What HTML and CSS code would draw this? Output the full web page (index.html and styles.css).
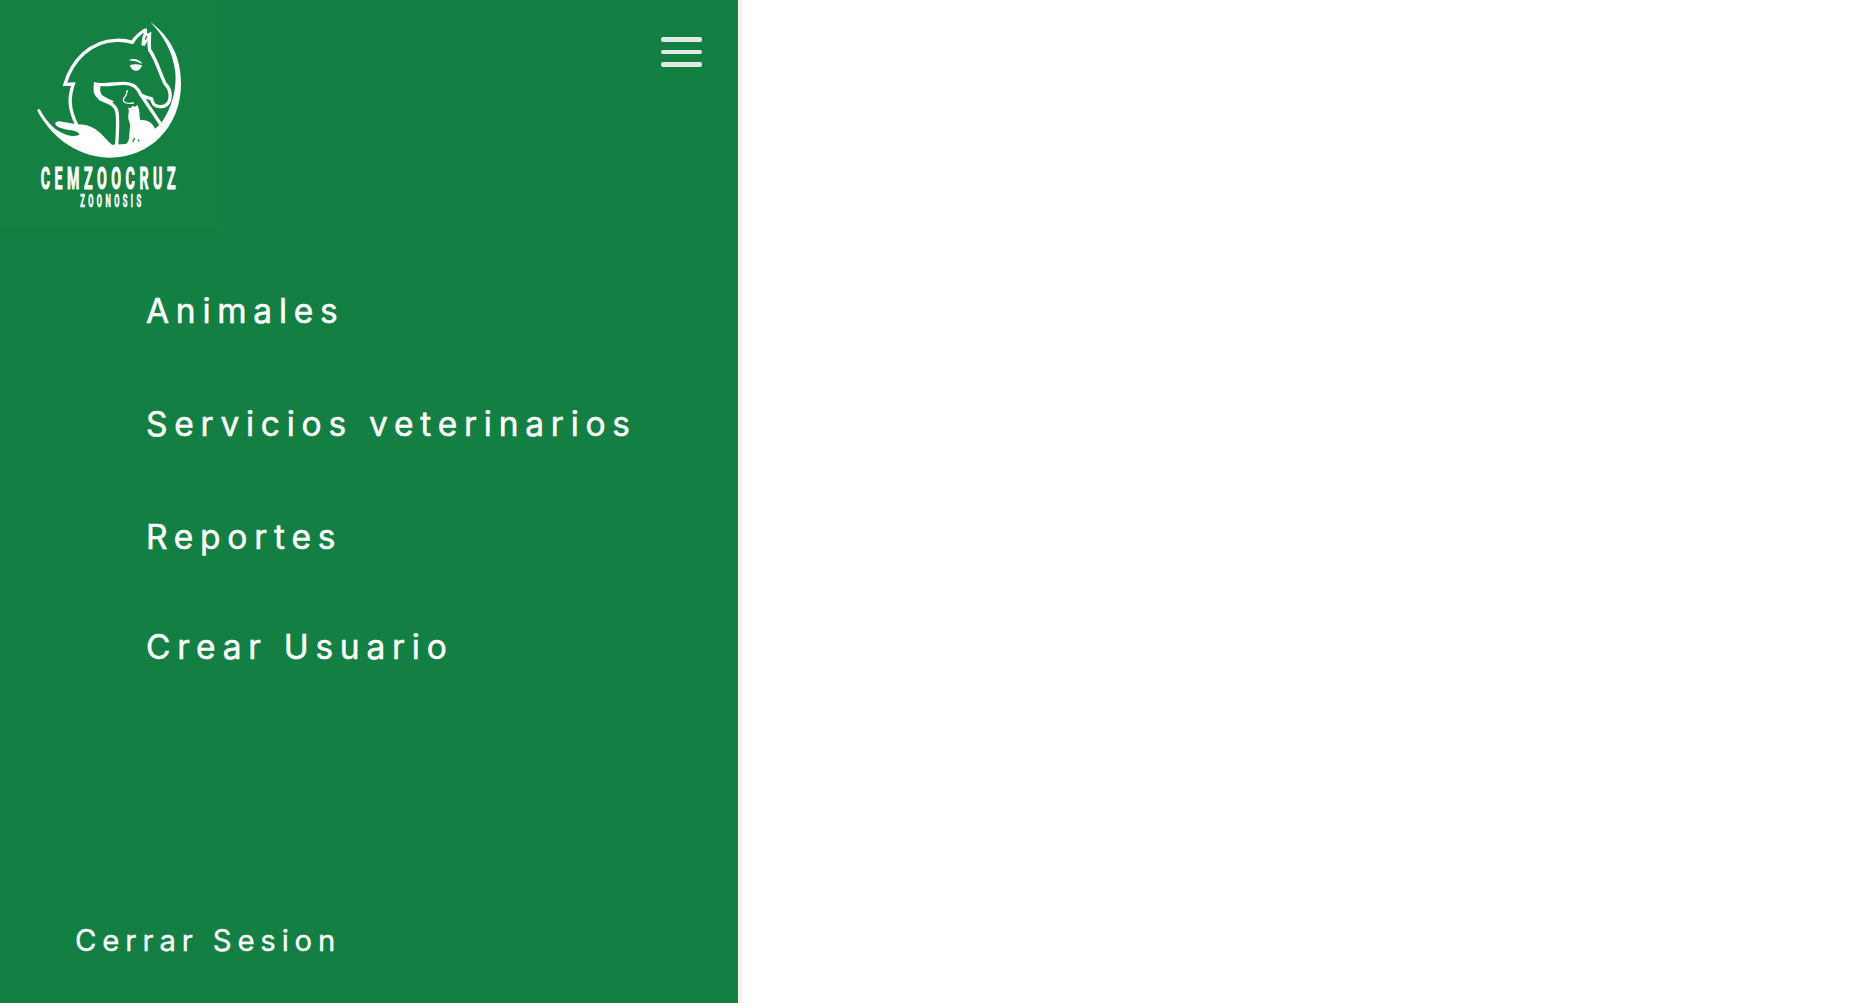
FILE: index.html
```html
<!DOCTYPE html>
<html lang="es">
<head>
<meta charset="utf-8">
<title>CEMZOOCRUZ</title>
<link rel="stylesheet" href="styles.css">
</head>
<body>
<aside class="sidebar">
  <header class="top">
    <svg class="logo" viewBox="0 0 666 690" role="img" aria-label="CEMZOOCRUZ Zoonosis">
      <g class="line">
        <path d="M229 372C206 324 206 292 220 252L195 253C216 181 272 123 348 121Q376 120 397 127Q411 104 434 91M448 108Q446 130 449 150C469 178 483 228 496 252Q508 263 510 279C514 310 496 321 480 320C461 319 459 310 454 296Q441 294 424 286"/>
        <path d="M288 252C312 258 343 250 369 250C407 250 414 268 425 288L481 371"/>
        <path d="M300 296C324 307 347 312 351 337Q355 362 350 436"/>
        <path class="hair" d="M382 272C378 283 380 287 372 294C364 309 384 312 400 309"/>
      </g>
      <g class="solid">
        <path d="M450 65C515 112 544 177 543 253C542 383 448 474 328 473C219 470 147 398 112 332Q113 325 119 328C143 370 166 394 201 405Q223 411 238 404Q236 397 224 393C203 388 175 388 166 373Q164 365 178 364L230 373C290 371 309 412 336 434L378 432Q389 422 388 401C389 385 393 375 386 361C382 341 390 337 384 323L391 325L397 318L406 320L412 315C420 328 417 346 421 360Q454 358 465 386L482 371C518 323 530 264 526 217C520 158 490 105 450 65Z"/>
        <path d="M282 246L302 257C299 269 300 279 309 287Q323 296 342 304L332 313C313 305 289 302 281 276Q280 260 282 246Z"/>
        <path d="M386 181C399 173 418 177 428 192Q407 182 386 181Z"/>
        <path d="M389 196Q407 190 426 196C422 216 398 220 389 196Z"/>
        <path d="M426 94L440 84L442 101L454 95L452 140L443 140L444 119L434 138L424 136L427 111L432 99Z"/>
      </g>
      <path class="cut" d="M398 426L404 414M414 424L418 419M440 108L436 119"/>
      <text class="name" transform="translate(122 566) scale(.46 1)" textLength="880">CEMZOOCRUZ</text>
      <text class="sub" transform="translate(241 622) scale(.42 1)" textLength="434">ZOONOSIS</text>
    </svg>
    <button class="toggle" aria-label="Menu"><span></span><span></span><span></span></button>
  </header>
  <nav class="menu">
    <a>Animales</a>
    <a>Servicios veterinarios</a>
    <a>Reportes</a>
    <a>Crear Usuario</a>
  </nav>
  <a class="logout">Cerrar Sesion</a>
</aside>
</body>
</html>
```
FILE: styles.css
```css
* { box-sizing: border-box; }
body { margin: 0; background: #fff; font-family: Inter, sans-serif; }
.sidebar { width: 738px; height: 1003px; display: flex; flex-direction: column; background: #147f43; box-shadow: 4px 0 1px #eef2f0; color: #fff; }
.top { height: 230px; display: flex; justify-content: space-between; align-items: flex-start; padding-right: 36px; }
.logo { width: 222px; height: 230px; display: block; background: #148041; }
.line path { fill: none; stroke: #fff; stroke-width: 10; stroke-linejoin: miter; stroke-linecap: round; }
.line .hair { stroke-width: 4; }
.solid { fill: #fff; }
.cut { fill: none; stroke: #148041; stroke-width: 4; }
.name, .sub { font-family: Roboto, "Liberation Sans", sans-serif; font-weight: 700; fill: #fff; stroke: #fff; }
.name { font-size: 93px; stroke-width: 3; }
.sub { font-size: 54px; stroke-width: 2; }
.toggle { display: flex; flex-direction: column; gap: 8px; width: 41px; padding: 0; margin-top: 37px; border: 0; background: none; }
.toggle span { height: 4.5px; border-radius: 2px; background: #dfebe4; }
.menu { display: flex; flex-direction: column; padding: 25px 0 0 146px; font-size: 33.5px; font-weight: 400; letter-spacing: 6.75px; line-height: 113px; white-space: nowrap; -webkit-text-stroke: .5px #fff; }
.menu a:last-child { margin-top: -3px; }
.logout { margin: auto 0 34px 75px; font-size: 29.3px; font-weight: 400; letter-spacing: 5.86px; line-height: 56px; -webkit-text-stroke: .3px #fff; }
```
